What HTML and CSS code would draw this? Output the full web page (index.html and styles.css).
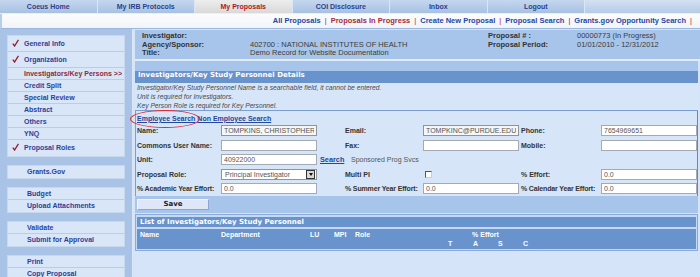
FILE: index.html
```html
<!DOCTYPE html>
<html lang="en">
<head>
    <meta charset="UTF-8">
    <meta name="viewport" content="width=device-width, initial-scale=1.0">
    <title>Coeus - Investigators/Key Study Personnel</title>
    <link rel="stylesheet" href="styles.css">
</head>
<body>

    <div class="tabs">
        <div class="tab">Coeus Home</div>
        <div class="tab">My IRB Protocols</div>
        <div class="tab tab-activa">My Proposals</div>
        <div class="tab">COI Disclosure</div>
        <div class="tab">Inbox</div>
        <div class="tab">Logout</div>
        <div class="tab-resto"></div>
    </div>

    <div class="subnav">
        <a href="#">All Proposals</a><span class="sep">|</span><a href="#" class="actual">Proposals In Progress</a><span class="sep">|</span><a href="#">Create New Proposal</a><span class="sep">|</span><a href="#">Proposal Search</a><span class="sep">|</span><a href="#">Grants.gov Opportunity Search</a><span class="sep">|</span>
    </div>

    <div class="pagina">
        <aside class="menu">
            <ul class="grupo">
                <li class="alto"><span class="check"><svg width="7" height="8" viewBox="0 0 7 8"><path d="M0.8 4.6 L2.6 7 L6.4 0.8" stroke="#8e1f2e" stroke-width="1.3" fill="none"/></svg></span>General Info</li>
                <li class="alto"><span class="check"><svg width="7" height="8" viewBox="0 0 7 8"><path d="M0.8 4.6 L2.6 7 L6.4 0.8" stroke="#8e1f2e" stroke-width="1.3" fill="none"/></svg></span>Organization</li>
                <li class="actual">Investigators/Key Persons &gt;&gt;</li>
                <li>Credit Split</li>
                <li>Special Review</li>
                <li>Abstract</li>
                <li>Others</li>
                <li>YNQ</li>
                <li class="alto"><span class="check"><svg width="7" height="8" viewBox="0 0 7 8"><path d="M0.8 4.6 L2.6 7 L6.4 0.8" stroke="#8e1f2e" stroke-width="1.3" fill="none"/></svg></span>Proposal Roles</li>
            </ul>
            <ul class="grupo simple">
                <li>Grants.Gov</li>
            </ul>
            <ul class="grupo simple">
                <li>Budget</li>
                <li>Upload Attachments</li>
            </ul>
            <ul class="grupo simple">
                <li>Validate</li>
                <li>Submit for Approval</li>
            </ul>
            <ul class="grupo simple">
                <li>Print</li>
                <li>Copy Proposal</li>
            </ul>
        </aside>

        <main class="contenido">
            <div class="info">
                <b>Investigator:</b><span></span><b>Proposal # :</b><span>00000773 (In Progress)</span>
                <b>Agency/Sponsor:</b><span>402700 : NATIONAL INSTITUTES OF HEALTH</span><b>Proposal Period:</b><span>01/01/2010 - 12/31/2012</span>
                <b>Title:</b><span>Demo Record for Website Documentation</span><span></span><span></span>
            </div>

            <div class="detalle">
                <div class="titulo">Investigators/Key Study Personnel Details</div>
                <div class="notas">
                    Investigator/Key Study Personnel Name is a searchable field, it cannot be entered.<br>
                    Unit is required for Investigators.<br>
                    Key Person Role is required for Key Personnel.
                </div>

                <div class="formulario">
                    <div class="buscar">
                        <a href="#">Employee Search</a> <a href="#">Non Employee Search</a>
                        <span class="marca"></span>
                    </div>

                    <div class="fila">
                        <b>Name:</b>
                        <input class="campo solo-lectura" value="TOMPKINS, CHRISTOPHER" readonly>
                        <span></span>
                        <b>Email:</b>
                        <input class="campo solo-lectura" value="TOMPKINC@PURDUE.EDU" readonly>
                        <b class="etiqueta3">Phone:</b>
                        <input class="campo" value="7654969651">
                    </div>
                    <div class="fila">
                        <b>Commons User Name:</b>
                        <input class="campo">
                        <span></span>
                        <b>Fax:</b>
                        <input class="campo">
                        <b class="etiqueta3">Mobile:</b>
                        <input class="campo">
                    </div>
                    <div class="fila">
                        <b>Unit:</b>
                        <input class="campo" value="40922000">
                        <a href="#" class="link-buscar">Search</a>
                        <span class="unidad">Sponsored Prog Svcs</span>
                    </div>
                    <div class="fila">
                        <b>Proposal Role:</b>
                        <div class="lista"><span>Principal Investigator</span><span class="flecha"></span></div>
                        <span></span>
                        <b>Multi PI</b>
                        <span><span class="casilla"></span></span>
                        <b class="etiqueta3">% Effort:</b>
                        <input class="campo" value="0.0">
                    </div>
                    <div class="fila">
                        <b class="apretado">% Academic Year Effort:</b>
                        <input class="campo" value="0.0">
                        <span></span>
                        <b class="apretado">% Summer Year Effort:</b>
                        <input class="campo" value="0.0">
                        <b class="etiqueta3 apretado">% Calendar Year Effort:</b>
                        <input class="campo" value="0.0">
                    </div>
                </div>

                <div class="guardar">
                    <button class="boton">Save</button>
                </div>
            </div>

            <div class="listado">
                <div class="titulo">List of Investigators/Key Study Personnel</div>
                <div class="columnas">
                    <span>Name</span>
                    <span>Department</span>
                    <span>LU</span>
                    <span>MPI</span>
                    <span>Role</span>
                    <span class="esfuerzo">% Effort</span>
                    <span class="vacio"></span>
                    <span class="col-t">T</span>
                    <span>A</span>
                    <span>S</span>
                    <span>C</span>
                </div>
            </div>
        </main>
    </div>

</body>
</html>
```

FILE: styles.css
```css
* {
    box-sizing: border-box;
}
body {
    margin: 0;
    width: 700px;
    height: 277px;
    overflow: hidden;
    font-family: "Liberation Sans", Arial, sans-serif;
    font-size: 7px;
    color: #333;
    background: #d5e4f8;
}
a {
    color: #2646a4;
    font-weight: bold;
    text-decoration: none;
}

/* pestañas superiores */
.tabs {
    display: flex;
    height: 14px;
    border-bottom: 1px solid #e9f0f8;
}
.tab {
    flex: 0 0 97.5px;
    text-align: center;
    line-height: 13px;
    font-weight: bold;
    color: #2d3f8e;
    background: linear-gradient(#c4d7ee, #a8c1e2);
    border-right: 1px solid #dbe6f4;
}
.tab-activa {
    color: #b0142c;
    background: linear-gradient(#ededed, #d9d9d9);
}
.tab-resto {
    flex: 1;
    background: linear-gradient(#d3e1f2, #b5cbe7);
}

.subnav {
    height: 15px;
    line-height: 14px;
    text-align: right;
    padding-right: 4px;
    font-size: 7.5px;
    background: linear-gradient(#fbfcfd, #f1f4f8);
    border-bottom: 1px solid #9ab7df;
    border-left: 2px solid #b7cde9;
}
.subnav .sep {
    color: #b0142c;
    margin: 0 4px;
}
.subnav .actual {
    color: #a8283c;
}

.pagina {
    display: flex;
    height: 248px;
}

/* menu lateral */
.menu {
    width: 133px;
    flex: 0 0 133px;
    background: #a8c3e6;
    padding: 6px 7px 0;
    border-right: 1px solid #dce7f6;
}
.grupo {
    list-style: none;
    margin: 0 0 8px;
    padding: 0;
    background: #d9e6f7;
    border: 1px solid #c6d7ee;
}
.grupo li {
    height: 12px;
    line-height: 11px;
    padding-left: 16px;
    border-bottom: 1px solid #b9cdea;
    color: #2c3f97;
    font-weight: bold;
}
.grupo li:last-child {
    border-bottom: none;
}
.grupo li.alto {
    height: 16px;
    line-height: 15px;
}
.grupo li.actual {
    color: #8e2a3c;
}
.grupo.simple li {
    padding-left: 19px;
}
.check {
    display: inline-block;
    width: 12px;
    margin-left: -12px;
    vertical-align: -1px;
}

/* contenido */
.contenido {
    flex: 1;
    padding: 1px 2px 0 2px;
}
.info {
    display: grid;
    grid-template-columns: 108px 238px 89px 1fr;
    background: #a7c4ea;
    padding: 2px 0 1px 7px;
    margin-right: -2px;
    font-size: 7.5px;
    line-height: 8.5px;
    border-bottom: 2px solid #e3edf9;
}
.info span {
    color: #3c3c3c;
}

.detalle {
    background: #a7c4ea;
    padding-top: 10px;
}
.titulo {
    height: 12px;
    line-height: 12px;
    padding-left: 3px;
    background: #6993cc;
    color: #fff;
    font: bold 7px "DejaVu Sans", Verdana, sans-serif;
}
.notas {
    height: 28px;
    padding: 0.5px 2px 0;
    background: #d6e5f8;
    border-bottom: 1px solid #7d9ed1;
    font-style: italic;
    font-size: 6.7px;
    line-height: 9px;
    color: #4a4a4a;
}

.formulario {
    background: #d6e5f8;
    padding: 3px 0 0 1px;
    border-left: 1px solid #7d9ed1;
    border-right: 1px solid #5f86c2;
}
.buscar {
    position: relative;
    height: 10px;
    line-height: 10px;
}
.buscar a {
    text-decoration: underline;
    color: #23469e;
}
.marca {
    position: absolute;
    left: -7px;
    top: -4px;
    width: 70px;
    height: 18px;
    border: 1.5px solid #e3262f;
    border-radius: 50%;
}
.fila {
    display: grid;
    grid-template-columns: 84px 96px 28px 78px 96px 82px 96px;
    height: 14.5px;
    align-items: center;
}
.fila b {
    white-space: nowrap;
}
.etiqueta3 {
    padding-left: 2px;
}
.apretado {
    letter-spacing: -0.15px;
}
.campo {
    width: 96px;
    height: 11px;
    margin: 0;
    padding: 0 2px;
    border: 1px solid #a3aab4;
    background: #fff;
    font: 7px "Liberation Sans", Arial, sans-serif;
    color: #555;
}
.solo-lectura {
    border-color: #8f949a;
    background: #f6f6f6;
}
.link-buscar {
    padding-left: 3px;
    text-decoration: underline;
    color: #23469e;
    font-size: 7.3px;
}
.unidad {
    grid-column: 4 / 8;
    padding-left: 6px;
    color: #555;
}
.lista {
    display: flex;
    align-items: center;
    justify-content: space-between;
    width: 96px;
    height: 11px;
    padding-left: 3px;
    border: 1px solid #8f949a;
    background: #fff;
    color: #555;
}
.flecha {
    width: 9px;
    height: 9px;
    margin-right: 1px;
    border: 1px solid #333;
    background: #d8d8d8;
    position: relative;
}
.flecha::after {
    content: "";
    position: absolute;
    left: 1.5px;
    top: 2.5px;
    border-left: 2.5px solid transparent;
    border-right: 2.5px solid transparent;
    border-top: 3px solid #111;
}
.casilla {
    display: inline-block;
    width: 7px;
    height: 7px;
    margin-left: 2px;
    border: 1px solid #555;
    border-right-color: #ccc;
    border-bottom-color: #ccc;
    background: #fff;
    vertical-align: middle;
}

.guardar {
    padding: 2.5px 0 3.5px 2px;
    background: #a7c4ea;
}
.boton {
    display: block;
    width: 72px;
    height: 11px;
    padding: 0;
    border: 1px solid #f2f5fb;
    border-right-color: #8ea6cf;
    border-bottom-color: #8ea6cf;
    background: #dfe7f6;
    font: bold 7px "DejaVu Sans", Verdana, sans-serif;
    color: #222;
}

.listado {
    margin-top: 1px;
    padding: 2px 1px 1px;
    border: 1px solid #8aaada;
    background: #c5d9f3;
}
.listado .titulo {
    height: 10px;
    line-height: 10px;
}
.columnas {
    display: grid;
    grid-template-columns: 81px 89px 24px 21px 93px 25px 25px 25px 1fr;
    margin-top: 2px;
    padding: 1px 0 1px 3px;
    background: #6993cc;
    color: #fff;
    font-weight: bold;
    line-height: 9px;
}
.esfuerzo {
    grid-column: 6 / 9;
    text-align: center;
}
.vacio {
    grid-column: 1 / 6;
}
```
